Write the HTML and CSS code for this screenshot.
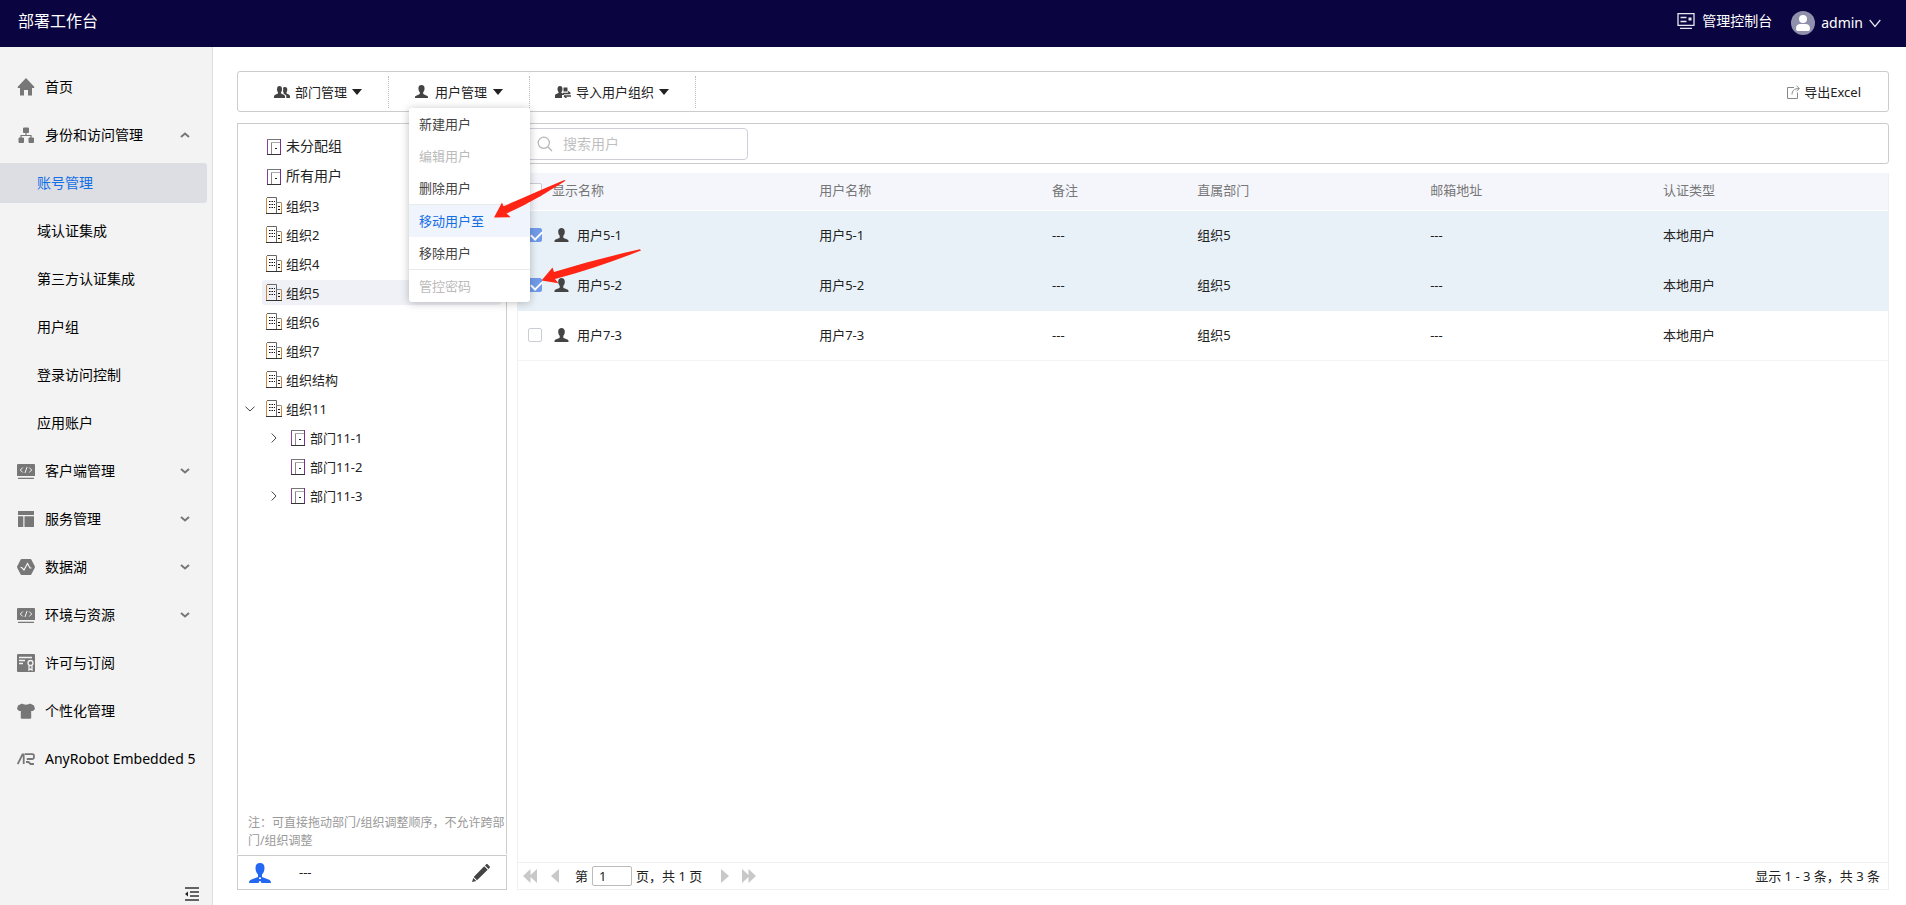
FILE: index.html
```html
<!DOCTYPE html>
<html lang="zh-CN">
<head>
<meta charset="utf-8">
<title>部署工作台</title>
<link rel="stylesheet" href="styles.css">
</head>
<body>
<svg class="sprite" aria-hidden="true">
  <symbol id="i-user" viewBox="0 0 15 14"><path d="M4.2 3.4C4.2 1.3 5.5 0 7.5 0s3.3 1.3 3.3 3.4c0 1.9-.5 3.400-1.500 4.400v1.400c0 .5.3.8 1 1.100l3 1.200c.9.4 1.200.8 1.200 1.500v1H.5v-1c0-.7.3-1.100 1.200-1.500l3-1.200c.7-.3 1-.6 1-1.100V7.800C4.700 6.800 4.200 5.300 4.200 3.400z"/></symbol>
  <symbol id="i-building" viewBox="0 0 16 17"><path d="M.5 16V1" stroke="#c98a3a"/><path d="M1 .5h9.500V16" stroke="#666"/><path d="M10.500 5.500h5" stroke="#888"/><path d="M15.500 6V16" stroke="#c98a3a"/><path d="M0 16.500h16" stroke="#333"/><path d="M3 4.500h1.500M5.500 4.500H7M8 4.500h1M3 7.500h1.500M5.500 7.500H7M8 7.500h1M3 10.500h1.500M5.500 10.500H7M8 10.500h1M12 9.500h2M12 12.500h2" stroke="#111"/></symbol>
  <symbol id="i-door" viewBox="0 0 16 17"><path d="M1.500 16V1" stroke="#8a3f9a"/><path d="M1 1.500h14" stroke="#777"/><path d="M14.500 1v15" stroke="#7a2f93"/><path d="M1 16.500h14" stroke="#333"/><path d="M5.500 16V5" stroke="#888"/><path d="M5 4.500h9" stroke="#aaa"/><path d="M9 10.500h2" stroke="#222"/></symbol>
  <symbol id="i-code" viewBox="0 0 18 15"><path d="M1 0h16a1 1 0 0 1 1 1v11H0V1a1 1 0 0 1 1-1zM1 13.700h16V15H1z"/><path d="M5.800 3.500 3.300 6l2.500 2.500M12.200 3.500 14.700 6l-2.500 2.500M10 3 8 9" fill="none" stroke="#f3f3f3"/></symbol>
  <symbol id="i-chev" viewBox="0 0 10 6"><path d="m1 1 4 3.500L9 1" fill="none" stroke="#777" stroke-width="2"/></symbol>
  <symbol id="i-thin" viewBox="0 0 10 6"><path d="m.5.700 4.500 4.300L9.500.700" fill="none" stroke="#444"/></symbol>
</svg>

<header class="topbar">
  <h1 class="topbar-title">部署工作台</h1>
  <nav class="topbar-nav">
    <a class="console-link" href="#"><svg width="18" height="16" viewBox="0 0 18 16" fill="none" stroke="#e6e6ee"><path d="M1 .700h16v11.600H1z" stroke-width="1.300"/><path d="M3.500 4.500h6M3.500 8.500h6M3 15.300h12" stroke-width="1.300"/><path d="M11.500 4.500h3v3h-3z" fill="#e6e6ee" stroke="none"/></svg><span>管理控制台</span></a>
    <button class="account" type="button"><svg width="24" height="24" viewBox="0 0 24 24"><circle cx="12" cy="12" r="12" fill="#8f90ab"/><circle cx="12" cy="8" r="4" fill="#fff"/><path d="M5 18c0-4 2-5 5-5h4c3 0 5 1 5 5 0 1.500-1 2-2 2H7c-1 0-2-.5-2-2z" fill="#fff"/></svg><span>admin</span><svg width="12" height="9" viewBox="0 0 12 9"><path d="m.7 1 5.300 6.500L11.300 1" fill="none" stroke="#e6e6ee" stroke-width="1.200"/></svg></button>
  </nav>
</header>

<div class="shell">
  <aside class="sidebar">
    <nav class="side-nav">
      <a class="side-item" href="#"><svg width="18" height="18" viewBox="0 0 18 18"><path d="M9 0 1 8.500c-.6.800-.4 1.500.5 1.500H3v7.500h4V12h4v5.500h4V10h1.500c.9 0 1.100-.7.5-1.500z"/></svg><span>首页</span></a>
      <a class="side-item" href="#"><svg width="18" height="18" viewBox="0 0 18 18"><path d="M6.500 2h5v4.500h-5zM2 12h4.500v4.500H2zM12 12h4.500v4.500H12z" stroke="#777" stroke-linejoin="round"/><path d="M9 6v3.500M4 12V9.500h10V12" fill="none" stroke="#777" stroke-width="1.200"/></svg><span>身份和访问管理</span><svg class="chev chev-up" width="10" height="6"><use href="#i-chev"/></svg></a>
      <a class="side-sub is-active" href="#">账号管理</a>
      <a class="side-sub" href="#">域认证集成</a>
      <a class="side-sub" href="#">第三方认证集成</a>
      <a class="side-sub" href="#">用户组</a>
      <a class="side-sub" href="#">登录访问控制</a>
      <a class="side-sub" href="#">应用账户</a>
      <a class="side-item" href="#"><svg width="18" height="15"><use href="#i-code"/></svg><span>客户端管理</span><svg class="chev" width="10" height="6"><use href="#i-chev"/></svg></a>
      <a class="side-item" href="#"><svg width="18" height="16" viewBox="0 0 18 16"><path d="M1 0h16v4H1zM1 5.200h5.300V16H1zM7.500 5.200H17V16H7.500z"/></svg><span>服务管理</span><svg class="chev" width="10" height="6"><use href="#i-chev"/></svg></a>
      <a class="side-item" href="#"><svg width="18" height="16" viewBox="0 0 18 16"><path d="M4.500 0h9l.8.500 3.500 6.700v1.600l-3.500 6.700-.8.500h-9l-.8-.5L.2 8.800V7.200L3.700.500z"/><path d="M3.500 8.500h1.200L7 11l3.500-6.500L13 9h1.500" fill="none" stroke="#f3f3f3" stroke-width="1.200"/></svg><span>数据湖</span><svg class="chev" width="10" height="6"><use href="#i-chev"/></svg></a>
      <a class="side-item" href="#"><svg width="18" height="15"><use href="#i-code"/></svg><span>环境与资源</span><svg class="chev" width="10" height="6"><use href="#i-chev"/></svg></a>
      <a class="side-item" href="#"><svg width="18" height="18" viewBox="0 0 18 18"><rect width="18" height="18" rx="1"/><g fill="none" stroke="#f3f3f3" stroke-width="1.300"><path d="M2 3.500h13M2 6.500h6M2 9.500h4"/><circle cx="13.500" cy="9" r="2.500"/><path d="M12 11.500V16l1.500-1 1.500 1v-4.500"/></g></svg><span>许可与订阅</span></a>
      <a class="side-item" href="#"><svg width="18" height="16" viewBox="0 0 18 16"><path d="M5 .500C6.500 2 11.500 2 13 .500l4 2 1 3.500-2 2h-1.800v7l-.7.700h-9l-.7-.7V8H2L0 6l1-3.500z"/></svg><span>个性化管理</span></a>
      <a class="side-item" href="#"><svg width="18" height="12" viewBox="0 0 18 12"><path d="M.7 11 5.500 1.500h1.200V11M8 1.200h7.500c2 0 2 4.800 0 4.800H9.800M9 9h2.500l2 2H17" fill="none" stroke="#777" stroke-width="1.800"/></svg><span>AnyRobot Embedded 5</span></a>
    </nav>
    <button class="collapse" type="button" aria-label="收起菜单"><svg width="14" height="14" viewBox="0 0 14 14"><path d="M0 1h14M5 5h9M5 9h9M0 13h14" stroke="#333" stroke-width="1.300"/><path d="m0 7 3-2.500v5z" fill="#222"/></svg></button>
  </aside>

  <main class="main">
    <div class="toolbar">
      <div class="tool tool-dept"><button type="button"><svg width="16" height="12" viewBox="0 0 16 12"><path d="M3 3.200C3 1.200 3.900 0 5.500 0S8 1.200 8 3.200c0 1.300-.4 2.500-1 3.200v1l2.800 1.300c.8.400 1.200.8 1.200 1.500V12H0v-1.800c0-.7.4-1.100 1.200-1.500L4 7.400v-1c-.6-.7-1-1.900-1-3.200zM9 2c.5-.8 1.100-1 2-1 1.600 0 2.300 1 2.300 2.700 0 1.100-.3 2.100-.8 2.700v1l2.300 1.200c.8.400 1.200.9 1.200 1.600V12h-3.700V9.500L9.500 7.400V6.200c-.4-.4-.5-.8-.5-1.200.4-1 .4-2 0-3z"/></svg><span>部门管理</span><i class="caret"></i></button></div>
      <div class="tool tool-user"><button type="button"><svg width="15" height="13"><use href="#i-user"/></svg><span>用户管理</span><i class="caret"></i></button>
        <ul class="menu">
          <li><button type="button">新建用户</button></li>
          <li><button type="button" disabled>编辑用户</button></li>
          <li><button type="button">删除用户</button></li>
          <li class="split"><button class="is-hover" type="button">移动用户至</button></li>
          <li><button type="button">移除用户</button></li>
          <li class="split"><button type="button" disabled>管控密码</button></li>
        </ul>
      </div>
      <div class="tool tool-import"><button type="button"><svg width="16" height="12" viewBox="0 0 16 12"><path d="M2.500 3C2.500 1 3.400 0 5 0s2.500 1 2.500 3c0 1.300-.3 2.300-1 3v1l2.500 1V9H7v3H0V9.500C0 8.500.5 8.100 1.200 7.900L3.500 7V6c-.7-.7-1-1.700-1-3zM8.500 1.500h4v4h-4z"/><path d="M8 7.500h7M13 5.500l2.500 2M9 10h7M9 10l2.500 2" stroke="#444" stroke-width="1.300"/></svg><span>导入用户组织</span><i class="caret"></i></button></div>
      <button class="export" type="button"><svg width="14" height="14" viewBox="0 0 14 14" fill="none" stroke="#888"><path d="M8 2.500H1.500v11h10V7.500"/><path d="M6 9.500C6 6 8 3.500 13 3.500M10.500.700l2.800 2.800-2.800 2.800"/></svg><span>导出Excel</span></button>
    </div>

    <div class="workspace">
      <section class="tree-col">
        <div class="tree">
          <ul class="tree-list">
            <li class="tree-row is-group"><span class="exp"></span><a href="#"><svg width="16" height="17" fill="none"><use href="#i-door"/></svg>未分配组</a></li>
            <li class="tree-row is-group"><span class="exp"></span><a href="#"><svg width="16" height="17" fill="none"><use href="#i-door"/></svg>所有用户</a></li>
            <li class="tree-row"><span class="exp"></span><a href="#"><svg width="16" height="17" fill="none"><use href="#i-building"/></svg>组织3</a></li>
            <li class="tree-row"><span class="exp"></span><a href="#"><svg width="16" height="17" fill="none"><use href="#i-building"/></svg>组织2</a></li>
            <li class="tree-row"><span class="exp"></span><a href="#"><svg width="16" height="17" fill="none"><use href="#i-building"/></svg>组织4</a></li>
            <li class="tree-row is-selected"><span class="exp"></span><a href="#"><svg width="16" height="17" fill="none"><use href="#i-building"/></svg>组织5</a></li>
            <li class="tree-row"><span class="exp"></span><a href="#"><svg width="16" height="17" fill="none"><use href="#i-building"/></svg>组织6</a></li>
            <li class="tree-row"><span class="exp"></span><a href="#"><svg width="16" height="17" fill="none"><use href="#i-building"/></svg>组织7</a></li>
            <li class="tree-row"><span class="exp"></span><a href="#"><svg width="16" height="17" fill="none"><use href="#i-building"/></svg>组织结构</a></li>
            <li class="tree-row"><button class="exp" type="button" aria-label="收起"><svg width="10" height="6"><use href="#i-thin"/></svg></button><a href="#"><svg width="16" height="17" fill="none"><use href="#i-building"/></svg>组织11</a></li>
            <li class="tree-row is-child"><button class="exp is-closed" type="button" aria-label="展开"><svg width="10" height="6"><use href="#i-thin"/></svg></button><a href="#"><svg width="16" height="17" fill="none"><use href="#i-door"/></svg>部门11-1</a></li>
            <li class="tree-row is-child"><span class="exp"></span><a href="#"><svg width="16" height="17" fill="none"><use href="#i-door"/></svg>部门11-2</a></li>
            <li class="tree-row is-child"><button class="exp is-closed" type="button" aria-label="展开"><svg width="10" height="6"><use href="#i-thin"/></svg></button><a href="#"><svg width="16" height="17" fill="none"><use href="#i-door"/></svg>部门11-3</a></li>
          </ul>
          <p class="tree-note">注：可直接拖动部门/组织调整顺序，不允许跨部门/组织调整</p>
        </div>
        <div class="manager">
          <svg width="22" height="20" viewBox="0 0 22 20" fill="#2468f2"><path d="M6.500 5c0-3.500 1.500-5 4.500-5s4.500 1.500 4.500 5c0 3-1 5-2.500 6.500V14l6.500 2.500c1.700.7 2.500 1.500 2.500 3.500H0c0-2 .8-2.800 2.500-3.500L9 14v-2.500C7.500 10 6.500 8 6.500 5z"/><path d="M10 14.500h2V16h-2zM9.500 20l1-2h1l1 2z" fill="#fff"/></svg>
          <span>---</span>
          <button type="button" aria-label="编辑"><svg width="18" height="18" viewBox="0 0 18 18" fill="#444"><path d="m13 1.500 1-1c.6-.6 1.200-.6 1.800 0l1.700 1.700c.6.600.6 1.200 0 1.800l-1 1zM12.200 2.300l3.500 3.500L5 16.300 1.700 13zM1.300 14l3 3L0 18z"/></svg></button>
        </div>
      </section>

      <section class="list-col">
        <div class="search-bar">
          <label class="search"><svg width="16" height="16" viewBox="0 0 16 16" fill="none" stroke="#b5b5b5" stroke-width="1.200"><circle cx="6.800" cy="6.800" r="5.600"/><path d="m11 11 4 4"/></svg><input type="text" placeholder="搜索用户" aria-label="搜索用户"></label>
        </div>
        <div class="grid">
          <table>
            <colgroup><col class="c-check"><col class="c-name"><col class="c-mid"><col class="c-note"><col class="c-mid"><col class="c-mid"><col></colgroup>
            <thead><tr><th><input type="checkbox" aria-label="全选"></th><th>显示名称</th><th>用户名称</th><th>备注</th><th>直属部门</th><th>邮箱地址</th><th>认证类型</th></tr></thead>
            <tbody>
              <tr class="is-checked"><td><input type="checkbox" checked aria-label="用户5-1"></td><td><span class="person"><svg width="15" height="14"><use href="#i-user"/></svg>用户5-1</span></td><td>用户5-1</td><td>---</td><td>组织5</td><td>---</td><td>本地用户</td></tr>
              <tr class="is-checked"><td><input type="checkbox" checked aria-label="用户5-2"></td><td><span class="person"><svg width="15" height="14"><use href="#i-user"/></svg>用户5-2</span></td><td>用户5-2</td><td>---</td><td>组织5</td><td>---</td><td>本地用户</td></tr>
              <tr><td><input type="checkbox" aria-label="用户7-3"></td><td><span class="person"><svg width="15" height="14"><use href="#i-user"/></svg>用户7-3</span></td><td>用户7-3</td><td>---</td><td>组织5</td><td>---</td><td>本地用户</td></tr>
            </tbody>
          </table>
          <footer class="pager">
            <button class="pg-first" type="button" aria-label="首页"><svg width="14" height="14" viewBox="0 0 14 14"><path d="m0 7 7.500-7v14zM6.500 7 14 0v14z"/></svg></button>
            <button class="pg-prev" type="button" aria-label="上一页"><svg width="8" height="14" viewBox="0 0 8 14"><path d="m0 7 8-7v14z"/></svg></button>
            <label class="pg-field">第<input type="text" value="1">页，共 1 页</label>
            <button class="pg-next" type="button" aria-label="下一页"><svg width="8" height="14" viewBox="0 0 8 14"><path d="m8 7-8-7v14z"/></svg></button>
            <button class="pg-last" type="button" aria-label="末页"><svg width="14" height="14" viewBox="0 0 14 14"><path d="M7.500 7 0 0v14zM14 7 6.500 0v14z"/></svg></button>
            <span class="pg-total">显示 1 - 3 条，共 3 条</span>
          </footer>
        </div>
      </section>
    </div>

    <svg class="pointers" width="152" height="108" viewBox="490 178 152 108" fill="#ff2413" aria-hidden="true">
      <path d="m494 217.500 8-15 1.500 3.700C525 197 545 188 564.500 180l1 .8C546 193 530 203 506.500 213.500l4.200 3.700z"/>
      <path d="m541.500 280.500 11-13 1.500 4.500c28-8.500 56-16 86-22.700l1 1.200C612 262 585 271 555 279l3.500 4.200z"/>
    </svg>
  </main>
</div>
</body>
</html>
```

FILE: styles.css
```css
* { box-sizing: border-box; }

body {
  margin: 0;
  height: 100vh;
  display: flex;
  flex-direction: column;
  font: 13px/20px "Noto Sans", "Noto Sans CJK SC", sans-serif;
  color: #222;
  background: #fff;
}

a { color: inherit; text-decoration: none; }
button { border: 0; padding: 0; background: none; font: inherit; color: inherit; }
input { font: inherit; color: inherit; }
ul { list-style: none; margin: 0; padding: 0; }
svg { flex: none; display: block; }
.sprite { position: absolute; width: 0; height: 0; }

/* Top bar */
.topbar {
  flex: none;
  height: 47px;
  display: flex;
  justify-content: space-between;
  padding: 0 25px 0 18px;
  background: #0a0540;
  color: #fff;
}
.topbar-title { margin: 0; font-size: 16px; font-weight: 400; line-height: 42px; }
.topbar-nav { display: flex; gap: 19px; font-size: 14px; }
.console-link { display: flex; align-items: center; gap: 7px; height: 42px; }
.account { display: flex; align-items: center; gap: 6px; height: 46px; }

/* Sidebar */
.shell { flex: 1; min-height: 0; display: flex; }
.sidebar {
  flex: none;
  width: 213px;
  display: flex;
  flex-direction: column;
  justify-content: space-between;
  padding: 20px 0 4px;
  background: #f3f3f3;
  border-right: 1px solid #ddd;
  font-size: 14px;
  color: #000;
}
.side-nav { display: flex; flex-direction: column; gap: 8px; padding-right: 5px; }
.side-item { display: flex; align-items: center; gap: 10px; height: 40px; padding: 0 17px; white-space: nowrap; }
.side-item svg { fill: #777; }
.chev { margin-left: auto; }
.chev-up { transform: rotate(180deg); }
.side-sub { height: 40px; padding-left: 37px; line-height: 40px; border-radius: 0 3px 3px 0; }
.side-sub.is-active { background: #dddee3; color: #126ee3; }
.collapse { align-self: flex-end; margin-right: 13px; }

/* Toolbar */
.main {
  position: relative;
  flex: 1;
  min-width: 0;
  display: flex;
  flex-direction: column;
  gap: 11px;
  padding: 24px 17px 15px 24px;
}
.toolbar {
  flex: none;
  height: 41px;
  display: flex;
  align-items: center;
  border: 1px solid #ccc;
  border-radius: 3px;
}
.tool { position: relative; height: 32px; display: flex; border-right: 1px dotted #bbb; }
.tool > button { display: flex; align-items: center; gap: 5px; }
.tool svg { fill: #444; }
.tool-dept { padding: 0 26px 0 36px; }
.tool-user { padding: 0 26px 0 25px; }
.tool-user > button { gap: 6px; }
.tool-import { padding: 0 26px 0 25px; }
.caret { border: 5px solid transparent; border-top: 6px solid #222; border-bottom: 0; }
.export { display: flex; align-items: center; gap: 4px; margin-left: auto; margin-right: 27px; }

.menu {
  position: absolute;
  top: 32px;
  left: 20px;
  z-index: 2;
  width: 121px;
  background: #fff;
  border-radius: 3px;
  box-shadow: 0 1px 8px rgba(0, 0, 0, 0.25);
  color: #444;
}
.menu button { display: block; width: 100%; height: 32px; padding: 0 10px; text-align: left; }
.menu button:disabled { color: #bbb; }
.menu .is-hover { background: #f0f4fd; color: #126ee3; }
.split { border-top: 1px solid #eaeaea; }

/* Organization tree */
.workspace { flex: 1; min-height: 0; display: flex; gap: 10px; }
.tree-col { flex: none; width: 270px; display: flex; flex-direction: column; gap: 1px; }
.tree {
  flex: 1;
  display: flex;
  flex-direction: column;
  justify-content: space-between;
  padding: 9px 0 4px;
  border: 1px solid #ccc;
  border-bottom: 0;
}
.tree-list { display: flex; flex-direction: column; gap: 4px; }
.tree-row { display: flex; align-items: center; gap: 4px; height: 25px; padding: 0 5px 0 4px; }
.tree-row.is-group { height: 26px; font-size: 14px; }
.tree-row.is-child { padding-left: 28px; }
.tree-row a { flex: 1; height: 25px; display: flex; align-items: center; gap: 4px; padding: 0 4px; border-radius: 3px; }
.is-selected a { background: #f0f1f7; }
.exp { width: 16px; height: 16px; display: flex; align-items: center; justify-content: center; }
.exp.is-closed { transform: rotate(-90deg); }
.tree-note { margin: 0; padding-left: 10px; font-size: 12px; line-height: 18px; color: #999; }
.manager {
  flex: none;
  height: 35px;
  display: flex;
  align-items: center;
  gap: 28px;
  padding: 0 16px 0 11px;
  border: 1px solid #ccc;
}
.manager button { margin-left: auto; }
.manager span { line-height: 32px; align-self: flex-start; }

/* User list */
.list-col { flex: 1; min-width: 0; display: flex; flex-direction: column; gap: 9px; }
.search-bar {
  flex: none;
  height: 41px;
  display: flex;
  align-items: center;
  padding: 0 8px;
  border: 1px solid #ccc;
  border-radius: 3px;
}
.search {
  display: flex;
  align-items: center;
  gap: 10px;
  width: 222px;
  height: 32px;
  padding: 0 10px;
  border: 1px solid #d0d0da;
  border-radius: 4px;
}
.search input { min-width: 0; flex: 1; padding: 0; border: 0; outline: 0; background: none; font-size: 14px; }
.search input::placeholder { color: #bfbfbf; }
.grid {
  flex: 1;
  display: flex;
  flex-direction: column;
  justify-content: space-between;
  border: 1px solid #f0f0f0;
  border-top: 0;
}
table { width: 100%; border-collapse: collapse; table-layout: fixed; }
.c-check { width: 34px; }
.c-name { width: 19.5%; }
.c-mid { width: 17%; }
.c-note { width: 10.6%; }
th, td { padding: 0; text-align: left; font-weight: 400; }
th { height: 37px; padding-bottom: 2px; background: #f5f6fc; border-bottom: 1px solid #fff; color: #777; }
td { height: 50px; border-bottom: 1px solid #f3f3f3; }
.is-checked td { background: #e8f1f7; border-color: #e8f1f7; }
th:first-child, td:first-child { padding-left: 10px; }
.person { display: flex; align-items: center; gap: 8px; }
.person svg { fill: #444; margin-left: 2px; }
input[type="checkbox"] {
  appearance: none;
  display: block;
  width: 14px;
  height: 14px;
  margin: 0;
  border: 1px solid #ccccd6;
  border-radius: 2px;
  background: #fff;
}
input[type="checkbox"]:checked { border-color: #719bea; background: #719bea; }
input[type="checkbox"]:checked::after {
  content: "";
  display: block;
  width: 5px;
  height: 9px;
  margin: 0 0 0 4px;
  border: solid #fff;
  border-width: 0 2px 2px 0;
  transform: rotate(45deg);
}

/* Pager */
.pager { display: flex; align-items: center; height: 27px; padding: 0 8px 0 5px; border-top: 1px solid #f0f0f0; }
.pager svg { fill: #c8c8c8; }
.pg-prev { margin: 0 16px 0 14px; }
.pg-next { margin: 0 13px 0 19px; }
.pg-field { display: flex; align-items: center; gap: 4px; }
.pg-field input { width: 40px; height: 20px; padding: 0 6px; border: 1px solid #bbb; border-radius: 2px; }
.pg-total { margin-left: auto; }

.pointers { position: absolute; left: 277px; top: 131px; z-index: 3; pointer-events: none; }
```
